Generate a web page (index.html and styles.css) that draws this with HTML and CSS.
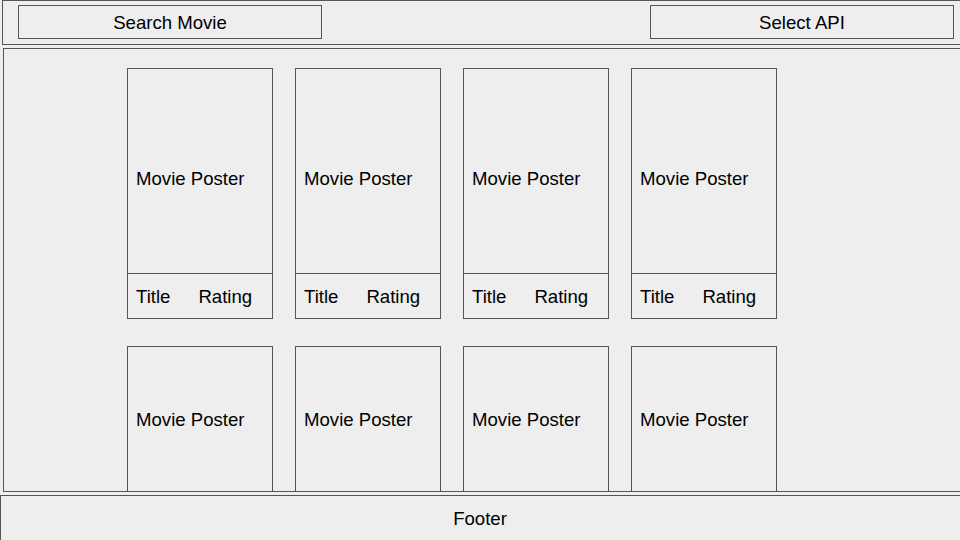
FILE: index.html
```html
<!DOCTYPE html>
<html lang="en">
<head>
<meta charset="utf-8">
<title>Movie Browser</title>
<link rel="stylesheet" href="styles.css">
</head>
<body>
<div class="page">
  <header class="topbar">
    <div class="btn">Search Movie</div>
    <div class="btn">Select API</div>
  </header>
  <main class="content">
    <div class="grid">
      <div class="card"><div class="poster">Movie Poster</div><div class="meta"><span>Title</span><span>Rating</span></div></div>
      <div class="card"><div class="poster">Movie Poster</div><div class="meta"><span>Title</span><span>Rating</span></div></div>
      <div class="card"><div class="poster">Movie Poster</div><div class="meta"><span>Title</span><span>Rating</span></div></div>
      <div class="card"><div class="poster">Movie Poster</div><div class="meta"><span>Title</span><span>Rating</span></div></div>
      <div class="card"><div class="poster poster-low">Movie Poster</div></div>
      <div class="card"><div class="poster poster-low">Movie Poster</div></div>
      <div class="card"><div class="poster poster-low">Movie Poster</div></div>
      <div class="card"><div class="poster poster-low">Movie Poster</div></div>
    </div>
  </main>
  <footer class="footer">Footer</footer>
</div>
</body>
</html>
```

FILE: styles.css
```css
* { box-sizing: border-box; }

html, body {
  margin: 0;
  padding: 0;
  width: 960px;
  height: 540px;
  overflow: hidden;
  background: #eeeeee;
}

body {
  font-family: "Liberation Sans", Arial, sans-serif;
  font-size: 18.6px;
  line-height: 21px;
  color: #000000;
}

.page {
  display: flex;
  flex-direction: column;
  width: 960px;
  height: 540px;
}

.topbar {
  flex: none;
  width: 960px;
  height: 45px;
  margin-left: 2px;
  padding: 4px 7px 5px 15px;
  border: 1px solid #555555;
  display: flex;
  justify-content: space-between;
  align-items: stretch;
}

.btn {
  width: 304px;
  border: 1px solid #555555;
  padding-top: 1px;
  display: flex;
  align-items: center;
  justify-content: center;
}

.content {
  flex: none;
  width: 960px;
  height: 444px;
  margin: 3px 0 0 3px;
  border: 1px solid #555555;
  overflow: hidden;
  padding: 19px 0 0 123px;
}

.grid {
  display: grid;
  grid-template-columns: repeat(4, 146px);
  column-gap: 22px;
  row-gap: 27px;
}

.card {
  height: 251px;
  border: 1px solid #555555;
  display: flex;
  flex-direction: column;
}

.poster {
  height: 204px;
  flex: none;
  padding: 99px 8px 0 8px;
}

.poster-low {
  padding-top: 62px;
}

.meta {
  flex: 1;
  border-top: 1px solid #555555;
  display: flex;
  gap: 28px;
  padding: 12px 8px 0 8px;
}

.footer {
  flex: none;
  width: 962px;
  height: 50px;
  margin-top: 3px;
  border: 1px solid #555555;
  padding-top: 12px;
  padding-right: 2px;
  text-align: center;
}
```
